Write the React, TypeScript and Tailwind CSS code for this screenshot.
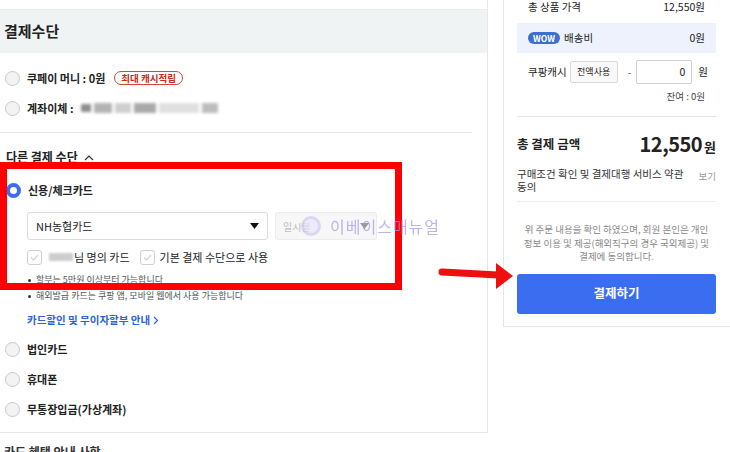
const Radio = ({ checked = false }: { checked?: boolean }) =>
  checked ? (
    <span className="w-[15px] h-[15px] rounded-full border-[4px] border-[#3a6df0] bg-white shrink-0" />
  ) : (
    <span className="w-[15px] h-[15px] rounded-full border border-[#c9c9c9] bg-[#f3f3f3] shrink-0" />
  );

const Check = () => (
  <span className="w-[15px] h-[15px] rounded-[3px] border border-[#cfcfcf] bg-white flex items-center justify-center shrink-0">
    <svg width="9" height="7" viewBox="0 0 9 7" fill="none">
      <path d="M1 3.5L3.4 6L8 1" stroke="#d5d5d5" strokeWidth="1.2" />
    </svg>
  </span>
);

const Caret = ({ color = "#111" }: { color?: string }) => (
  <svg width="9" height="6" viewBox="0 0 9 6">
    <path d="M0 0H9L4.5 6Z" fill={color} />
  </svg>
);

const OptionRow = ({ label, checked }: { label: string; checked?: boolean }) => (
  <div className="h-[30px] flex items-center gap-[7px] pl-[5px]">
    <Radio checked={checked} />
    <span className="text-[11px] font-semibold text-[#222]">{label}</span>
  </div>
);

export default function App() {
  return (
    <div className="relative w-[730px] h-[452px] overflow-hidden bg-white flex font-['Noto_Sans_CJK_KR',sans-serif] text-[#222]">
      {/* left: payment methods */}
      <div className="w-[488px] shrink-0 flex flex-col">
        <div className="border-r border-b border-[#e6e8e8]">
          <div className="h-[10px] border-b border-[#eceeee]" />
          <div className="h-[43px] bg-[#f0f3f3] flex items-center px-[4px]">
            <h2 className="text-[15px] font-bold">결제수단</h2>
          </div>

          <div className="pt-[10px]">
            <div className="h-[30px] flex items-center gap-[7px] pl-[5px]">
              <Radio />
              <span className="text-[11px] font-semibold">쿠페이 머니 : 0원</span>
              <span className="ml-[2px] h-[14px] px-[6px] rounded-full border border-[#d5453a] text-[#c7291d] text-[9.5px] font-bold flex items-center">
                최대 캐시적립
              </span>
            </div>
            <div className="h-[30px] flex items-center gap-[7px] pl-[5px]">
              <Radio />
              <span className="text-[11px] font-semibold">계좌이체 :</span>
              <div className="flex items-center gap-[3px] blur-[1.5px]">
                <span className="w-[10px] h-[8px] bg-[#8d8d8d]" />
                <span className="w-[18px] h-[10px] bg-[#b3b3b3]" />
                <span className="w-[16px] h-[10px] bg-[#cfcfcf]" />
                <span className="w-[22px] h-[10px] bg-[#a9a9a9]" />
                <span className="w-[40px] h-[10px] bg-[#e0e0e0]" />
                <span className="w-[16px] h-[10px] bg-[#bdbdbd]" />
              </div>
            </div>
          </div>

          <div className="mt-[9px] mr-[15px] border-t border-[#e8e8e8]" />

          <div className="mt-[12px] h-[24px] flex items-center gap-[6px] pl-[6px]">
            <span className="text-[12px] font-semibold">다른 결제 수단</span>
            <svg width="10" height="7" viewBox="0 0 10 7" fill="none">
              <path d="M1 6L5 2L9 6" stroke="#333" strokeWidth="1.2" />
            </svg>
          </div>

          <div className="mt-[7px] h-[28px] flex items-center gap-[7px] pl-[6px]">
            <Radio checked />
            <span className="text-[11px] font-semibold">신용/체크카드</span>
          </div>

          <div className="mt-[8px] pl-[27px] flex gap-[7px]">
            <div className="w-[241px] h-[28px] border border-[#dcdcdc] rounded-[3px] flex items-center justify-between px-[8px]">
              <span className="text-[11px]">NH농협카드</span>
              <Caret />
            </div>
            <div className="w-[102px] h-[28px] border border-[#ececec] bg-[#f7f7f7] rounded-[3px] flex items-center justify-between px-[7px]">
              <span className="text-[10px] text-[#bdbdbd]">일시불</span>
              <Caret color="#9a9a9a" />
            </div>
          </div>

          <div className="mt-[7px] pl-[27px] h-[20px] flex items-center text-[11px]">
            <Check />
            <span className="ml-[7px] w-[24px] h-[8px] bg-[#cdcdcd] blur-[1px]" />
            <span className="ml-[1px]">님 명의 카드</span>
            <span className="ml-[10px]">
              <Check />
            </span>
            <span className="ml-[5px]">기본 결제 수단으로 사용</span>
          </div>

          <ul className="mt-[5px] pl-[28px] text-[9px] text-[#555]">
            <li className="h-[16px] flex items-center gap-[5px]">
              <span className="w-[3px] h-[3px] rounded-full bg-[#333]" />할부는 5만원 이상부터 가능합니다
            </li>
            <li className="h-[16px] flex items-center gap-[5px]">
              <span className="w-[3px] h-[3px] rounded-full bg-[#333]" />해외발급 카드는 쿠팡 앱, 모바일 웹에서 사용 가능합니다
            </li>
          </ul>

          <div className="mt-[6px] h-[20px] pl-[27px] flex items-center gap-[3px] text-[10.5px] font-semibold text-[#2c63d6]">
            카드할인 및 무이자할부 안내
            <svg width="6" height="9" viewBox="0 0 6 9" fill="none">
              <path d="M1 1L4.5 4.5L1 8" stroke="#2c63d6" strokeWidth="1.2" />
            </svg>
          </div>

          <div className="mt-[4px] pb-[8px]">
            <OptionRow label="법인카드" />
            <OptionRow label="휴대폰" />
            <OptionRow label="무통장입금(가상계좌)" />
          </div>
        </div>
        <div className="mt-[10px] pl-[4px] text-[12px] font-bold text-[#333]">카드 혜택 안내 사항</div>
      </div>

      {/* right: order summary */}
      <div className="ml-[15px] w-[227px] self-start border-l border-b border-[#e6e8e8] pl-[13px] pr-[14px] pb-[12px] text-[10.5px]">
        <div className="h-[14px] flex items-center justify-between px-[11px]">
          <span>총 상품 가격</span>
          <span>12,550원</span>
        </div>
        <div className="mt-[9px] h-[30px] bg-[#eef2fc] flex items-center justify-between px-[11px]">
          <div className="flex items-center gap-[4px]">
            <span className="h-[12px] px-[5px] rounded-full bg-[#3d6fd0] text-white text-[8.5px] font-bold flex items-center">
              WOW
            </span>
            <span>배송비</span>
          </div>
          <span>0원</span>
        </div>
        <div className="mt-[7px] h-[24px] flex items-center pl-[11px] pr-[9px] whitespace-nowrap">
          <span className="shrink-0">쿠팡캐시</span>
          <span className="ml-[3px] shrink-0 h-[22px] w-[48px] border border-[#d8d8d8] rounded-[2px] bg-[#fafafa] text-[9px] flex items-center justify-center">
            전액사용
          </span>
          <span className="ml-[10px] shrink-0 text-[#666]">-</span>
          <span className="ml-[5px] shrink-0 h-[24px] w-[56px] border border-[#cfcfcf] rounded-[2px] flex items-center justify-end pr-[6px]">
            0
          </span>
          <span className="ml-[6px] shrink-0">원</span>
        </div>
        <div className="mt-[5px] h-[14px] flex items-center justify-end pr-[11px] text-[9.5px] text-[#444]">
          잔여 : 0원
        </div>
        <div className="mt-[13px] border-t border-[#e4e4e4]" />
        <div className="mt-[14px] h-[26px] flex items-center justify-between">
          <span className="text-[12.5px] font-bold">총 결제 금액</span>
          <span className="font-bold">
            <span className="text-[20px] tracking-[-0.5px]">12,550</span>
            <span className="ml-[2px] text-[13px]">원</span>
          </span>
        </div>
        <div className="mt-[10px] flex justify-between gap-[12px]">
          <p className="text-[10.5px] leading-[13px] text-[#333] break-all">구매조건 확인 및 결제대행 서비스 약관 동의</p>
          <span className="mt-[2px] shrink-0 text-[9.5px] text-[#999]">보기</span>
        </div>
        <div className="mt-[8px] border-t border-[#ececec]" />
        <p className="mt-[21px] text-center text-[9.5px] leading-[13.5px] text-[#888]">
          위 주문 내용을 확인 하였으며, 회원 본인은 개인
          <br />
          정보 이용 및 제공(해외직구의 경우 국외제공) 및
          <br />
          결제에 동의합니다.
        </p>
        <button className="mt-[10px] w-full h-[40px] rounded-[3px] bg-[#3a6df0] text-white text-[12.5px] font-bold">
          결제하기
        </button>
      </div>

      {/* annotation overlays */}
      <div className="absolute left-0 top-[162px] w-[402px] h-[128px] border-[7px] border-[#ff0000] pointer-events-none" />
      <svg className="absolute left-[436px] top-[260px]" width="80" height="32" viewBox="0 0 80 32">
        <path d="M6 12L62 15" stroke="#ee0f0f" strokeWidth="7" strokeLinecap="round" />
        <path d="M60 3L77 16L60 29Z" fill="#ee0f0f" />
      </svg>
      <div className="absolute left-[301px] top-[214px] flex items-center gap-[9px] opacity-70 pointer-events-none">
        <span className="w-[20px] h-[20px] rounded-full border-[3px] border-[#cfcaf0] bg-[#e9e6fb]" />
        <span className="text-[16px] text-[#9f97e6] tracking-[1px]">이베이스매뉴얼</span>
      </div>
    </div>
  );
}
